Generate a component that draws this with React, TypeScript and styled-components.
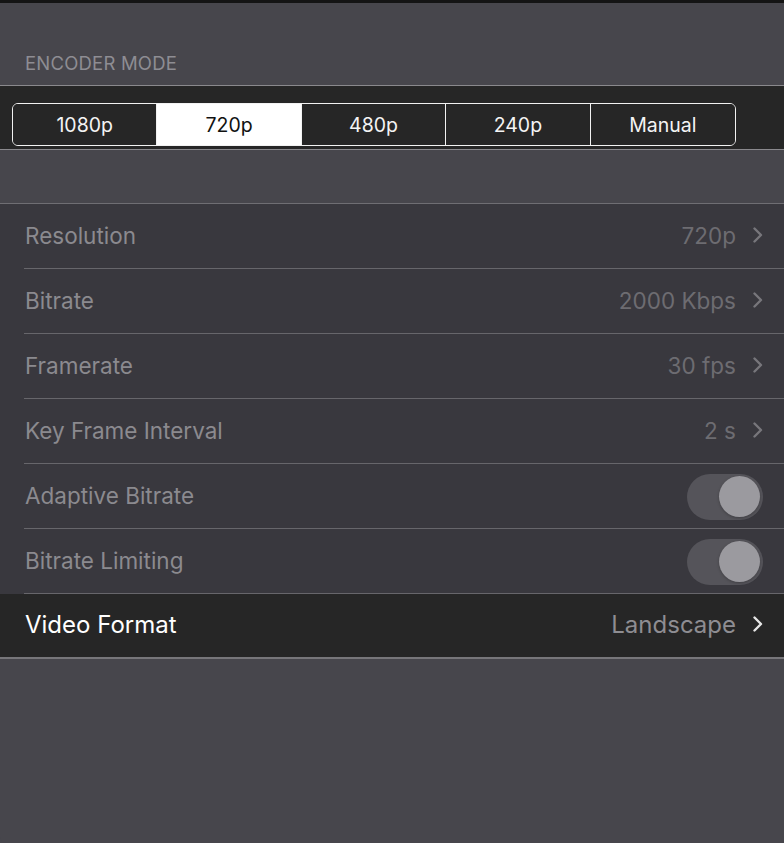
import React from "react";
import styled, { createGlobalStyle } from "styled-components";

const Global = createGlobalStyle`
  html, body { margin: 0; padding: 0; background: #47464c; }
  body { font-family: Inter, "Noto Sans", "Liberation Sans", sans-serif; -webkit-font-smoothing: antialiased; }
  * { box-sizing: border-box; }
`;

const Screen = styled.div`
  width: 784px;
  height: 843px;
  background: #47464c;
  border-top: 3px solid #141414;
  border-bottom-left-radius: 6px;
  overflow: hidden;
  display: flex;
  flex-direction: column;
`;

const SectionHeader = styled.div`
  height: 82px;
  display: flex;
  align-items: flex-end;
  padding: 0 0 11px 25px;
  font-size: 18.5px;
  letter-spacing: 0.2px;
  color: #8e8d93;
`;

const Band = styled.div`
  height: 65px;
  background: #262626;
  border-top: 1px solid #8a898d;
  border-bottom: 1px solid #8a898d;
  padding: 17px 0 0 12px;
`;

const Segmented = styled.div`
  width: 724px;
  height: 43px;
  display: grid;
  grid-template-columns: repeat(5, 1fr);
  border: 1.5px solid #f2f2f2;
  border-radius: 6px;
  overflow: hidden;
`;

const Segment = styled.div<{ $active?: boolean; $last?: boolean }>`
  display: flex;
  align-items: center;
  justify-content: center;
  font-size: 19.5px;
  color: ${(p) => (p.$active ? "#111" : "#f4f4f4")};
  background: ${(p) => (p.$active ? "#ffffff" : "#262626")};
  border-right: ${(p) => (p.$last ? "none" : "1.5px solid #f2f2f2")};
`;

const Spacer = styled.div`
  height: 54px;
  border-bottom: 1px solid #6f6e73;
`;

const List = styled.div`
  background: #39383e;
  display: flex;
  flex-direction: column;
`;

const Row = styled.div<{ $highlight?: boolean; $last?: boolean }>`
  height: 65px;
  display: flex;
  align-items: center;
  padding: 0 0 3px 25px;
  position: relative;
  background: ${(p) => (p.$highlight ? "#262626" : "#39383e")};
  border-bottom: ${(p) => (p.$last ? "2px solid #77767a" : "none")};
  &::after {
    content: "";
    display: ${(p) => (p.$last ? "none" : "block")};
    position: absolute;
    left: 24px;
    right: 0;
    bottom: 0;
    height: 1px;
    background: #67666b;
  }
`;

const Title = styled.div<{ $bright?: boolean }>`
  flex: 1;
  font-size: ${(p) => (p.$bright ? "24px" : "22.5px")};
  color: ${(p) => (p.$bright ? "#ffffff" : "#8b8a8f")};
`;

const Value = styled.div<{ $bright?: boolean }>`
  font-size: ${(p) => (p.$bright ? "24px" : "22.5px")};
  color: ${(p) => (p.$bright ? "#8e8d92" : "#6d6c71")};
  margin-right: 16px;
`;

const ChevronWrap = styled.div`
  width: 12px;
  margin-right: 20px;
  display: flex;
  align-items: center;
`;

const Toggle = styled.div`
  width: 76px;
  height: 46px;
  border-radius: 23px;
  background: #55545a;
  margin: 3px 21px 0 0;
  display: flex;
  align-items: center;
  justify-content: flex-end;
  padding-right: 3px;
`;

const Knob = styled.div`
  width: 41px;
  height: 41px;
  border-radius: 50%;
  background: #9b9a9f;
  box-shadow: 0 1px 3px rgba(0, 0, 0, 0.25);
`;

const Chevron = ({ color }: { color: string }) => (
  <svg width="12" height="16" viewBox="0 0 12 16">
    <path d="M2.5 1.5 L9 8 L2.5 14.5" fill="none" stroke={color} strokeWidth="2.4" strokeLinecap="round" strokeLinejoin="round" />
  </svg>
);

const modes = ["1080p", "720p", "480p", "240p", "Manual"];

const rows: { title: string; value?: string; toggle?: boolean }[] = [
  { title: "Resolution", value: "720p" },
  { title: "Bitrate", value: "2000 Kbps" },
  { title: "Framerate", value: "30 fps" },
  { title: "Key Frame Interval", value: "2 s" },
  { title: "Adaptive Bitrate", toggle: true },
  { title: "Bitrate Limiting", toggle: true },
];

export default function App() {
  return (
    <>
      <Global />
      <Screen>
        <SectionHeader>ENCODER MODE</SectionHeader>
        <Band>
          <Segmented>
            {modes.map((m, i) => (
              <Segment key={m} $active={m === "720p"} $last={i === modes.length - 1}>
                {m}
              </Segment>
            ))}
          </Segmented>
        </Band>
        <Spacer />
        <List>
          {rows.map((r) => (
            <Row key={r.title}>
              <Title>{r.title}</Title>
              {r.toggle ? (
                <Toggle>
                  <Knob />
                </Toggle>
              ) : (
                <>
                  <Value>{r.value}</Value>
                  <ChevronWrap>
                    <Chevron color="#77767b" />
                  </ChevronWrap>
                </>
              )}
            </Row>
          ))}
          <Row $highlight $last>
            <Title $bright>Video Format</Title>
            <Value $bright>Landscape</Value>
            <ChevronWrap>
              <Chevron color="#e6e6e6" />
            </ChevronWrap>
          </Row>
        </List>
      </Screen>
    </>
  );
}
